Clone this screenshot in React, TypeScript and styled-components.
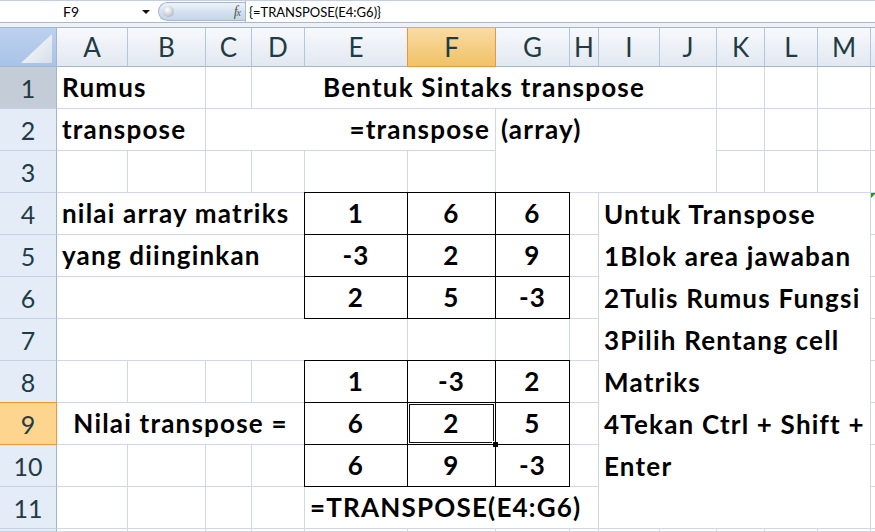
import React from 'react';
import styled, { createGlobalStyle, css } from 'styled-components';

const GRID = '#d0d7e5';
const HEAD_LINE = '#9eb6ce';
const ACTIVE_LINE = '#f29536';
const FONT = `Lato, "Open Sans", "Liberation Sans", sans-serif`;

const GlobalStyle = createGlobalStyle`
  html, body {
    margin: 0;
    padding: 0;
    background: #fff;
  }
  body {
    width: 875px;
    height: 532px;
    overflow: hidden;
    font-family: ${FONT};
  }
  * {
    box-sizing: border-box;
  }
`;

const Workbook = styled.div`
  display: flex;
  flex-direction: column;
  width: 875px;
  height: 532px;
  overflow: hidden;
`;

const FormulaBar = styled.div`
  display: flex;
  align-items: stretch;
  height: 23px;
  border-top: 1px solid #c3cfde;
  border-bottom: 1px solid #a9b8ca;
  background: #fff;
`;

const NameBox = styled.div`
  display: flex;
  align-items: center;
  width: 158px;
  font-size: 14px;
  color: #000;
`;

const NameText = styled.span`
  flex: 0 0 142px;
  text-align: center;
`;

const DropArrow = styled.span`
  width: 0;
  height: 0;
  border-left: 4px solid transparent;
  border-right: 4px solid transparent;
  border-top: 4px solid #111;
`;

const FxPill = styled.div`
  position: relative;
  display: flex;
  align-items: center;
  justify-content: flex-end;
  width: 87px;
  margin: 1px 0;
  padding-right: 5px;
  border: 1px solid #a3b6cd;
  border-right: none;
  border-radius: 11px 0 0 11px;
  background: linear-gradient(#eef3fa, #d3e0f0 55%, #c5d5ea);
`;

const FxKnob = styled.span`
  position: absolute;
  left: 4px;
  top: 50%;
  width: 11px;
  height: 11px;
  margin-top: -5.5px;
  border-radius: 50%;
  background: radial-gradient(circle at 40% 35%, #ffffff, #c8ccd2 60%, #9aa2ad);
`;

const FxLabel = styled.span`
  font-family: "Liberation Serif", "DejaVu Serif", serif;
  font-style: italic;
  font-size: 14px;
  color: #555;
  letter-spacing: -1px;

  small {
    font-size: 10px;
  }
`;

const FormulaInput = styled.div`
  flex: 1;
  display: flex;
  align-items: center;
  padding-left: 3px;
  border-left: 1px solid #a9b8ca;
  font-size: 13px;
  color: #000;
`;

const Gap = styled.div`
  height: 4px;
  background: #eef2f8;
`;

const Sheet = styled.div`
  flex: 1;
  display: grid;
  grid-template-columns: 57px 71px 78px 46px 53px 103px 88px 74px 29px 61px 57px 48px 53px 53px 1fr;
  grid-template-rows: 39px repeat(11, 42px) 1fr;
  border-top: 1px solid ${HEAD_LINE};
  overflow: hidden;
`;

const Corner = styled.div`
  position: relative;
  background: linear-gradient(#bcd1ee, #a9c3e7);
  border-right: 1px solid ${HEAD_LINE};
  border-bottom: 1px solid ${HEAD_LINE};

  &::after {
    content: '';
    position: absolute;
    right: 4px;
    bottom: 3px;
    width: 31px;
    height: 29px;
    background: linear-gradient(135deg, #ffffff, #d6dee9);
    clip-path: polygon(100% 0, 100% 100%, 0 100%);
  }
`;

const ColHeader = styled.div<{ $active?: boolean }>`
  display: flex;
  align-items: center;
  justify-content: center;
  font-size: 26px;
  color: #1f3b44;
  background: linear-gradient(#f7f9fc, #e2e8f1);
  border-right: 1px solid #b4c6da;
  border-bottom: 1px solid ${HEAD_LINE};
  ${(p) =>
    p.$active &&
    css`
      background: linear-gradient(#f9dba4, #f1c266);
      border-right-color: ${ACTIVE_LINE};
      border-bottom-color: ${ACTIVE_LINE};
      box-shadow: -1px 0 0 ${ACTIVE_LINE};
    `}
`;

const RowHeader = styled.div<{ $active?: boolean; $hover?: boolean }>`
  display: flex;
  align-items: center;
  justify-content: center;
  font-size: 25px;
  color: #1f3b44;
  background: #e4ecf7;
  border-right: 1px solid ${HEAD_LINE};
  border-bottom: 1px solid #c3d1e2;
  overflow: hidden;
  ${(p) =>
    p.$hover &&
    css`
      background: #c3ccd7;
    `}
  ${(p) =>
    p.$active &&
    css`
      background: #fed58e;
      border-right-color: ${ACTIVE_LINE};
      border-bottom-color: ${ACTIVE_LINE};
      box-shadow: 0 -1px 0 ${ACTIVE_LINE};
    `}
`;

type Align = 'left' | 'center' | 'right';

const justify: Record<Align, string> = {
  left: 'flex-start',
  center: 'center',
  right: 'flex-end',
};

const cellText = css`
  font-size: 26px;
  font-weight: 700;
  letter-spacing: 1.2px;
  color: #000;
  white-space: nowrap;
`;

const Cell = styled.div<{
  $span?: number;
  $rows?: number;
  $align?: Align;
  $top?: boolean;
  $boxed?: boolean;
  $flag?: boolean;
}>`
  ${cellText}
  position: relative;
  display: flex;
  align-items: ${(p) => (p.$top ? 'flex-start' : 'center')};
  justify-content: ${(p) => justify[p.$align || 'left']};
  grid-column: span ${(p) => p.$span || 1};
  grid-row: span ${(p) => p.$rows || 1};
  padding: 0 5px;
  line-height: 41px;
  border-right: 1px solid ${GRID};
  border-bottom: 1px solid ${GRID};
  ${(p) =>
    p.$boxed &&
    css`
      border-right-color: #000;
      border-bottom-color: #000;
      box-shadow: -1px 0 0 #000, 0 -1px 0 #000, -1px -1px 0 #000;
    `}
  ${(p) =>
    p.$flag &&
    css`
      &::before {
        content: '';
        position: absolute;
        left: 0;
        top: 0;
        width: 5px;
        height: 5px;
        background: #1a9a1a;
        clip-path: polygon(0 0, 100% 0, 0 100%);
      }
    `}
`;

const Note = styled.div`
  ${cellText}
  grid-column: span 5;
  grid-row: span 8;
  padding: 0 5px;
  line-height: 42px;
  background: #fff;
  border-right: 1px solid ${GRID};
  border-bottom: 1px solid ${GRID};
`;

const Selection = styled.div`
  position: absolute;
  inset: -1px;
  border: 1px solid #000;
  box-shadow: inset 0 0 0 1px #fff, inset 0 0 0 2px #111;
  pointer-events: none;
`;

const FillHandle = styled.span`
  position: absolute;
  right: -4px;
  bottom: -4px;
  width: 7px;
  height: 7px;
  background: #000;
  border: 1px solid #fff;
`;

type CellSpec = {
  text?: string;
  span?: number;
  rows?: number;
  align?: Align;
  top?: boolean;
  boxed?: boolean;
  flag?: boolean;
  selected?: boolean;
  note?: string[];
};

const columns = ['A', 'B', 'C', 'D', 'E', 'F', 'G', 'H', 'I', 'J', 'K', 'L', 'M', ''];

const blank = (n: number): CellSpec[] => Array.from({ length: n }, () => ({}));
const boxed = (...vals: string[]): CellSpec[] => vals.map((text) => ({ text, boxed: true, align: 'center' }));

const noteLines = [
  'Untuk Transpose',
  '1Blok area jawaban',
  '2Tulis Rumus Fungsi',
  '3Pilih Rentang cell',
  'Matriks',
  '4Tekan Ctrl + Shift +',
  'Enter',
];

const rows: CellSpec[][] = [
  [{ text: 'Rumus', span: 2 }, {}, { text: 'Bentuk Sintaks transpose', span: 7, align: 'center' }, ...blank(4)],
  [
    { text: 'transpose', span: 2 },
    { text: '=transpose', span: 4, align: 'right' },
    { text: '(array)', span: 4, rows: 2, top: true },
    ...blank(4),
  ],
  [...blank(6), ...blank(4)],
  [{ text: 'nilai array matriks', span: 4 }, ...boxed('1', '6', '6'), {}, { note: noteLines }, { flag: true }],
  [{ text: 'yang diinginkan', span: 4 }, ...boxed('-3', '2', '9'), {}, {}],
  [{ span: 4 }, ...boxed('2', '5', '-3'), {}, {}],
  [{ span: 5 }, {}, {}, {}, {}],
  [...blank(4), ...boxed('1', '-3', '2'), {}, {}],
  [
    { text: 'Nilai transpose =', span: 4, align: 'center' },
    ...boxed('6'),
    { text: '2', boxed: true, align: 'center', selected: true },
    ...boxed('5'),
    {},
    {},
  ],
  [...blank(4), ...boxed('6', '9', '-3'), {}, {}],
  [...blank(4), { text: '=TRANSPOSE(E4:G6)', span: 4 }, {}],
  blank(14),
];

const App: React.FC = () => {
  return (
    <Workbook>
      <GlobalStyle />
      <FormulaBar>
        <NameBox>
          <NameText>F9</NameText>
          <DropArrow />
        </NameBox>
        <FxPill>
          <FxKnob />
          <FxLabel>
            f<small>x</small>
          </FxLabel>
        </FxPill>
        <FormulaInput>{'{=TRANSPOSE(E4:G6)}'}</FormulaInput>
      </FormulaBar>
      <Gap />
      <Sheet>
        <Corner />
        {columns.map((c, i) => (
          <ColHeader key={i} $active={c === 'F'}>
            {c}
          </ColHeader>
        ))}
        {rows.map((cells, r) => (
          <React.Fragment key={r}>
            {/* row 12 is only a sliver at the bottom edge, so no number */}
            <RowHeader $active={r === 8} $hover={r === 0}>
              {r < 11 ? r + 1 : null}
            </RowHeader>
            {cells.map((cell, i) =>
              cell.note ? (
                <Note key={i}>
                  {cell.note.map((line) => (
                    <div key={line}>{line}</div>
                  ))}
                </Note>
              ) : (
                <Cell
                  key={i}
                  $span={cell.span}
                  $rows={cell.rows}
                  $align={cell.align}
                  $top={cell.top}
                  $boxed={cell.boxed}
                  $flag={cell.flag}
                >
                  {cell.text}
                  {cell.selected && (
                    <Selection>
                      <FillHandle />
                    </Selection>
                  )}
                </Cell>
              )
            )}
          </React.Fragment>
        ))}
      </Sheet>
    </Workbook>
  );
};

export default App;
